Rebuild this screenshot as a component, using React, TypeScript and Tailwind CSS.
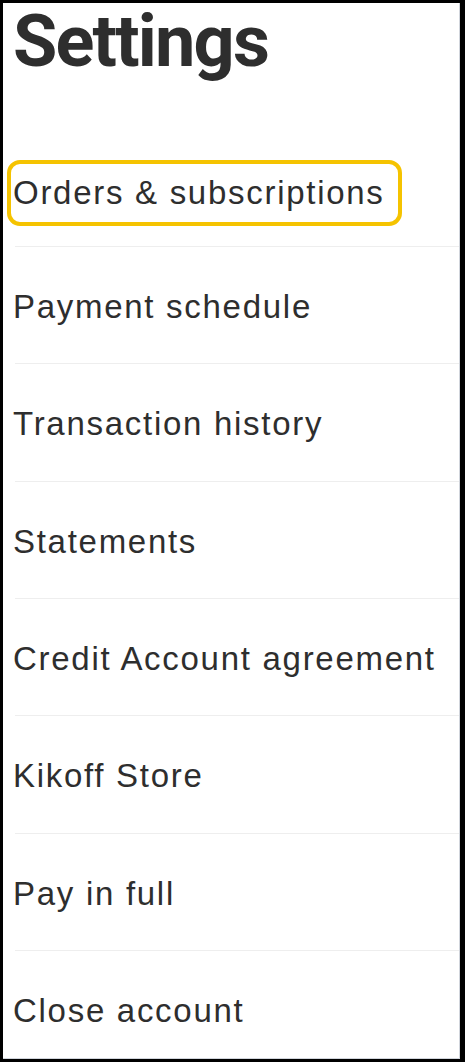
import React from "react";

const items = [
  "Payment schedule",
  "Transaction history",
  "Statements",
  "Credit Account agreement",
  "Kikoff Store",
  "Pay in full",
  "Close account",
];

function App() {
  return (
    <div className="h-[1062px] w-[465px] overflow-hidden bg-black">
      <div className="h-full border-l-[3px] border-t-[3px] border-r-[5px] border-b-[3px] border-black">
        <div className="h-full bg-white border-r border-b border-gray-300 text-[#2e2e2e]">
          <h1 className="pt-[3px] pl-[10px] text-[72px] leading-[72px] font-bold tracking-[-0.025em] font-['Roboto',sans-serif]">
            Settings
          </h1>

          <div className="font-['Liberation_Sans',Arial,sans-serif] text-[33px] leading-[40px] tracking-[0.052em]">
            {/* first row has the focus ring on it */}
            <div className="ml-[12px] pt-[86px] pb-[24px] border-b border-[#eeeeee]">
              <a
                href="#"
                className="-ml-[4px] block w-[387px] pt-[9px] pb-[9px] pl-[2px] rounded-[9px] outline-4 outline-[#f5c300]"
              >
                Orders &amp; subscriptions
              </a>
            </div>
            {items.map((item, index) => (
              <div
                key={index}
                className={`ml-[12px] pt-[40px] pb-[36.33px] ${index < items.length - 1 ? "border-b border-[#eeeeee]" : ""}`}
              >
                <span className="block -ml-[2px]">{item}</span>
              </div>
            ))}
          </div>
        </div>
      </div>
    </div>
  );
}

export default App;
